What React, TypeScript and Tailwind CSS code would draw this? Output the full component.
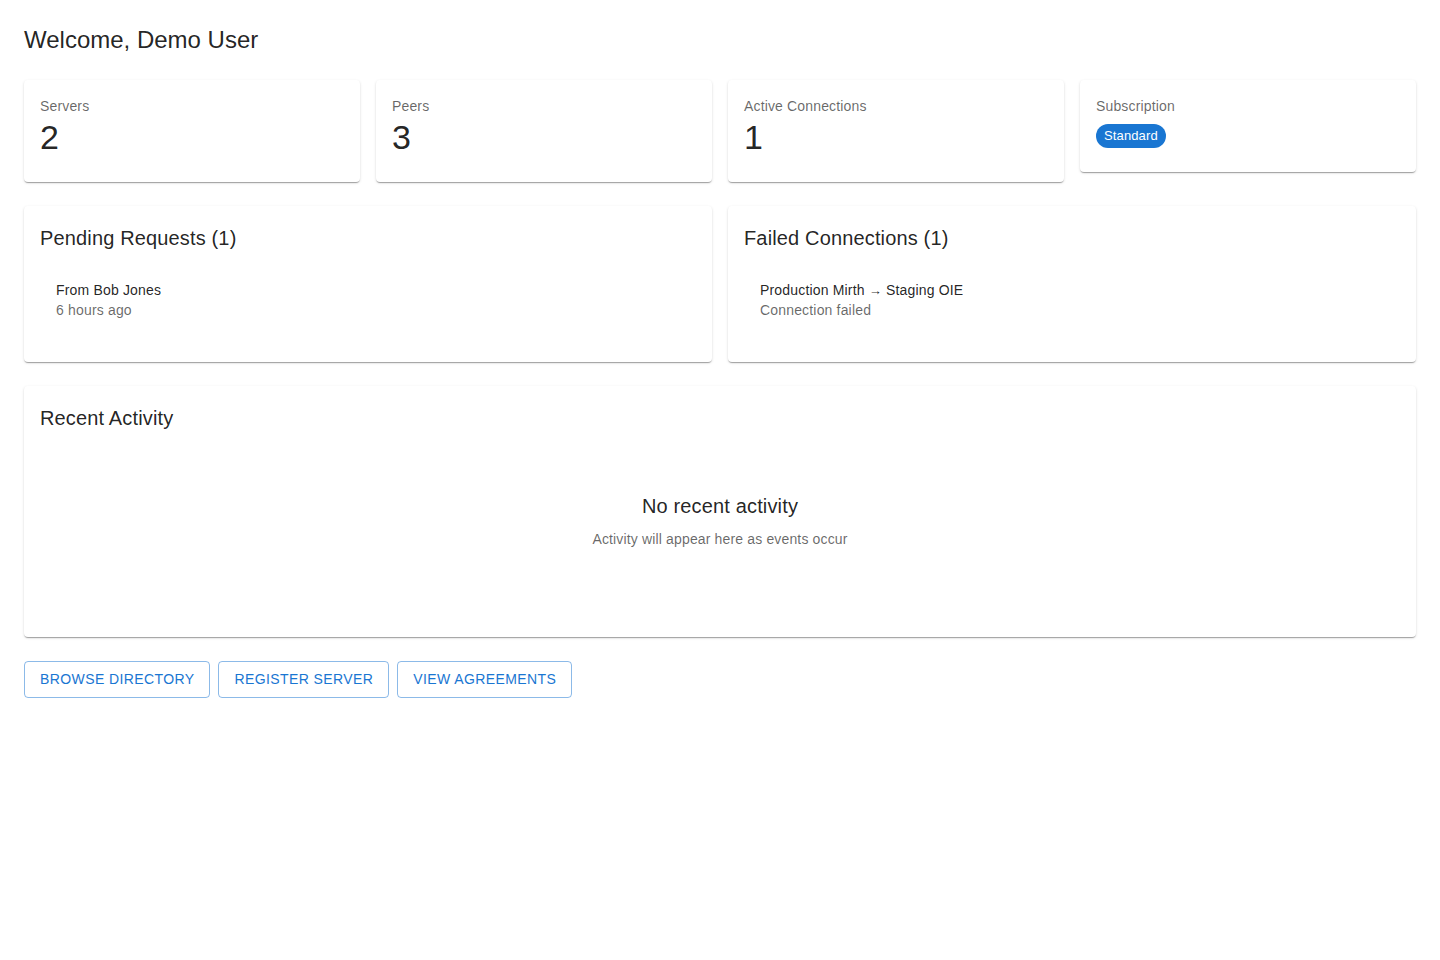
import React from "react";

const cardShadow =
  "rounded-[4px] bg-white shadow-[0px_2px_1px_-1px_rgba(0,0,0,0.2),0px_1px_1px_0px_rgba(0,0,0,0.14),0px_1px_3px_0px_rgba(0,0,0,0.12)]";

function StatCard({ label, value }: { label: string; value: string }) {
  return (
    <div className={`${cardShadow} px-4 pt-4 pb-6`}>
      <div className="text-sm leading-5 tracking-[0.01071em] text-black/60">{label}</div>
      <div className="text-[34px] leading-[42px] tracking-[0.00735em] text-black/[0.87]">{value}</div>
    </div>
  );
}

function ListCard({
  title,
  primary,
  secondary,
}: {
  title: string;
  primary: React.ReactNode;
  secondary: string;
}) {
  return (
    <div className={`${cardShadow} px-4 pt-4 pb-6`}>
      <h2 className="text-xl leading-8 tracking-[0.0075em] text-black/[0.87]">{title}</h2>
      <ul className="pt-[26px] pb-[18px]">
        <li className="px-4 tracking-[0.01071em]">
          <div className="h-5 text-sm leading-5 text-black/[0.87]">{primary}</div>
          <div className="text-sm leading-5 text-black/60">{secondary}</div>
        </li>
      </ul>
    </div>
  );
}

export default function App() {
  return (
    <div className="min-h-[960px] bg-white p-6 font-['Liberation_Sans',Arial,sans-serif] text-black/[0.87]">
      {/* Header */}
      <h1 className="mb-6 text-2xl leading-8 font-normal">Welcome, Demo User</h1>

      {/* Stats */}
      <div className="grid grid-cols-4 items-start gap-4">
        <StatCard label="Servers" value="2" />
        <StatCard label="Peers" value="3" />
        <StatCard label="Active Connections" value="1" />
        <div className={`${cardShadow} px-4 pt-4 pb-6`}>
          <div className="text-sm leading-5 tracking-[0.01071em] text-black/60">Subscription</div>
          <span className="mt-2 inline-flex h-6 items-center rounded-2xl bg-[#1976d2] px-2 text-[13px] tracking-[0.01em] text-white">
            Standard
          </span>
        </div>
      </div>

      {/* Requests / failures */}
      <div className="mt-6 grid grid-cols-2 items-start gap-4">
        <ListCard title="Pending Requests (1)" primary="From Bob Jones" secondary="6 hours ago" />
        <ListCard
          title="Failed Connections (1)"
          primary={
            <>
              Production Mirth <span className="align-baseline text-[13px] leading-none">→</span> Staging OIE
            </>
          }
          secondary="Connection failed"
        />
      </div>

      {/* Recent activity */}
      <div className={`${cardShadow} mt-6 px-4 pt-4 pb-6`}>
        <h2 className="text-xl leading-8 tracking-[0.0075em]">Recent Activity</h2>
        <div className="flex flex-col items-center pt-14 pb-[64px] text-center">
          <div className="text-xl leading-8 tracking-[0.0075em]">No recent activity</div>
          <div className="mt-[7px] text-sm leading-5 tracking-[0.01071em] text-black/60">
            Activity will appear here as events occur
          </div>
        </div>
      </div>

      {/* Actions */}
      <div className="mt-6 flex gap-2">
        {["Browse Directory", "Register Server", "View Agreements"].map((t) => (
          <button
            key={t}
            className="h-[37px] rounded-[4px] border border-[#1976d2]/50 px-[15px] text-sm leading-[17px] font-normal tracking-[0.02857em] text-[#1976d2] uppercase"
          >
            {t}
          </button>
        ))}
      </div>
    </div>
  );
}
